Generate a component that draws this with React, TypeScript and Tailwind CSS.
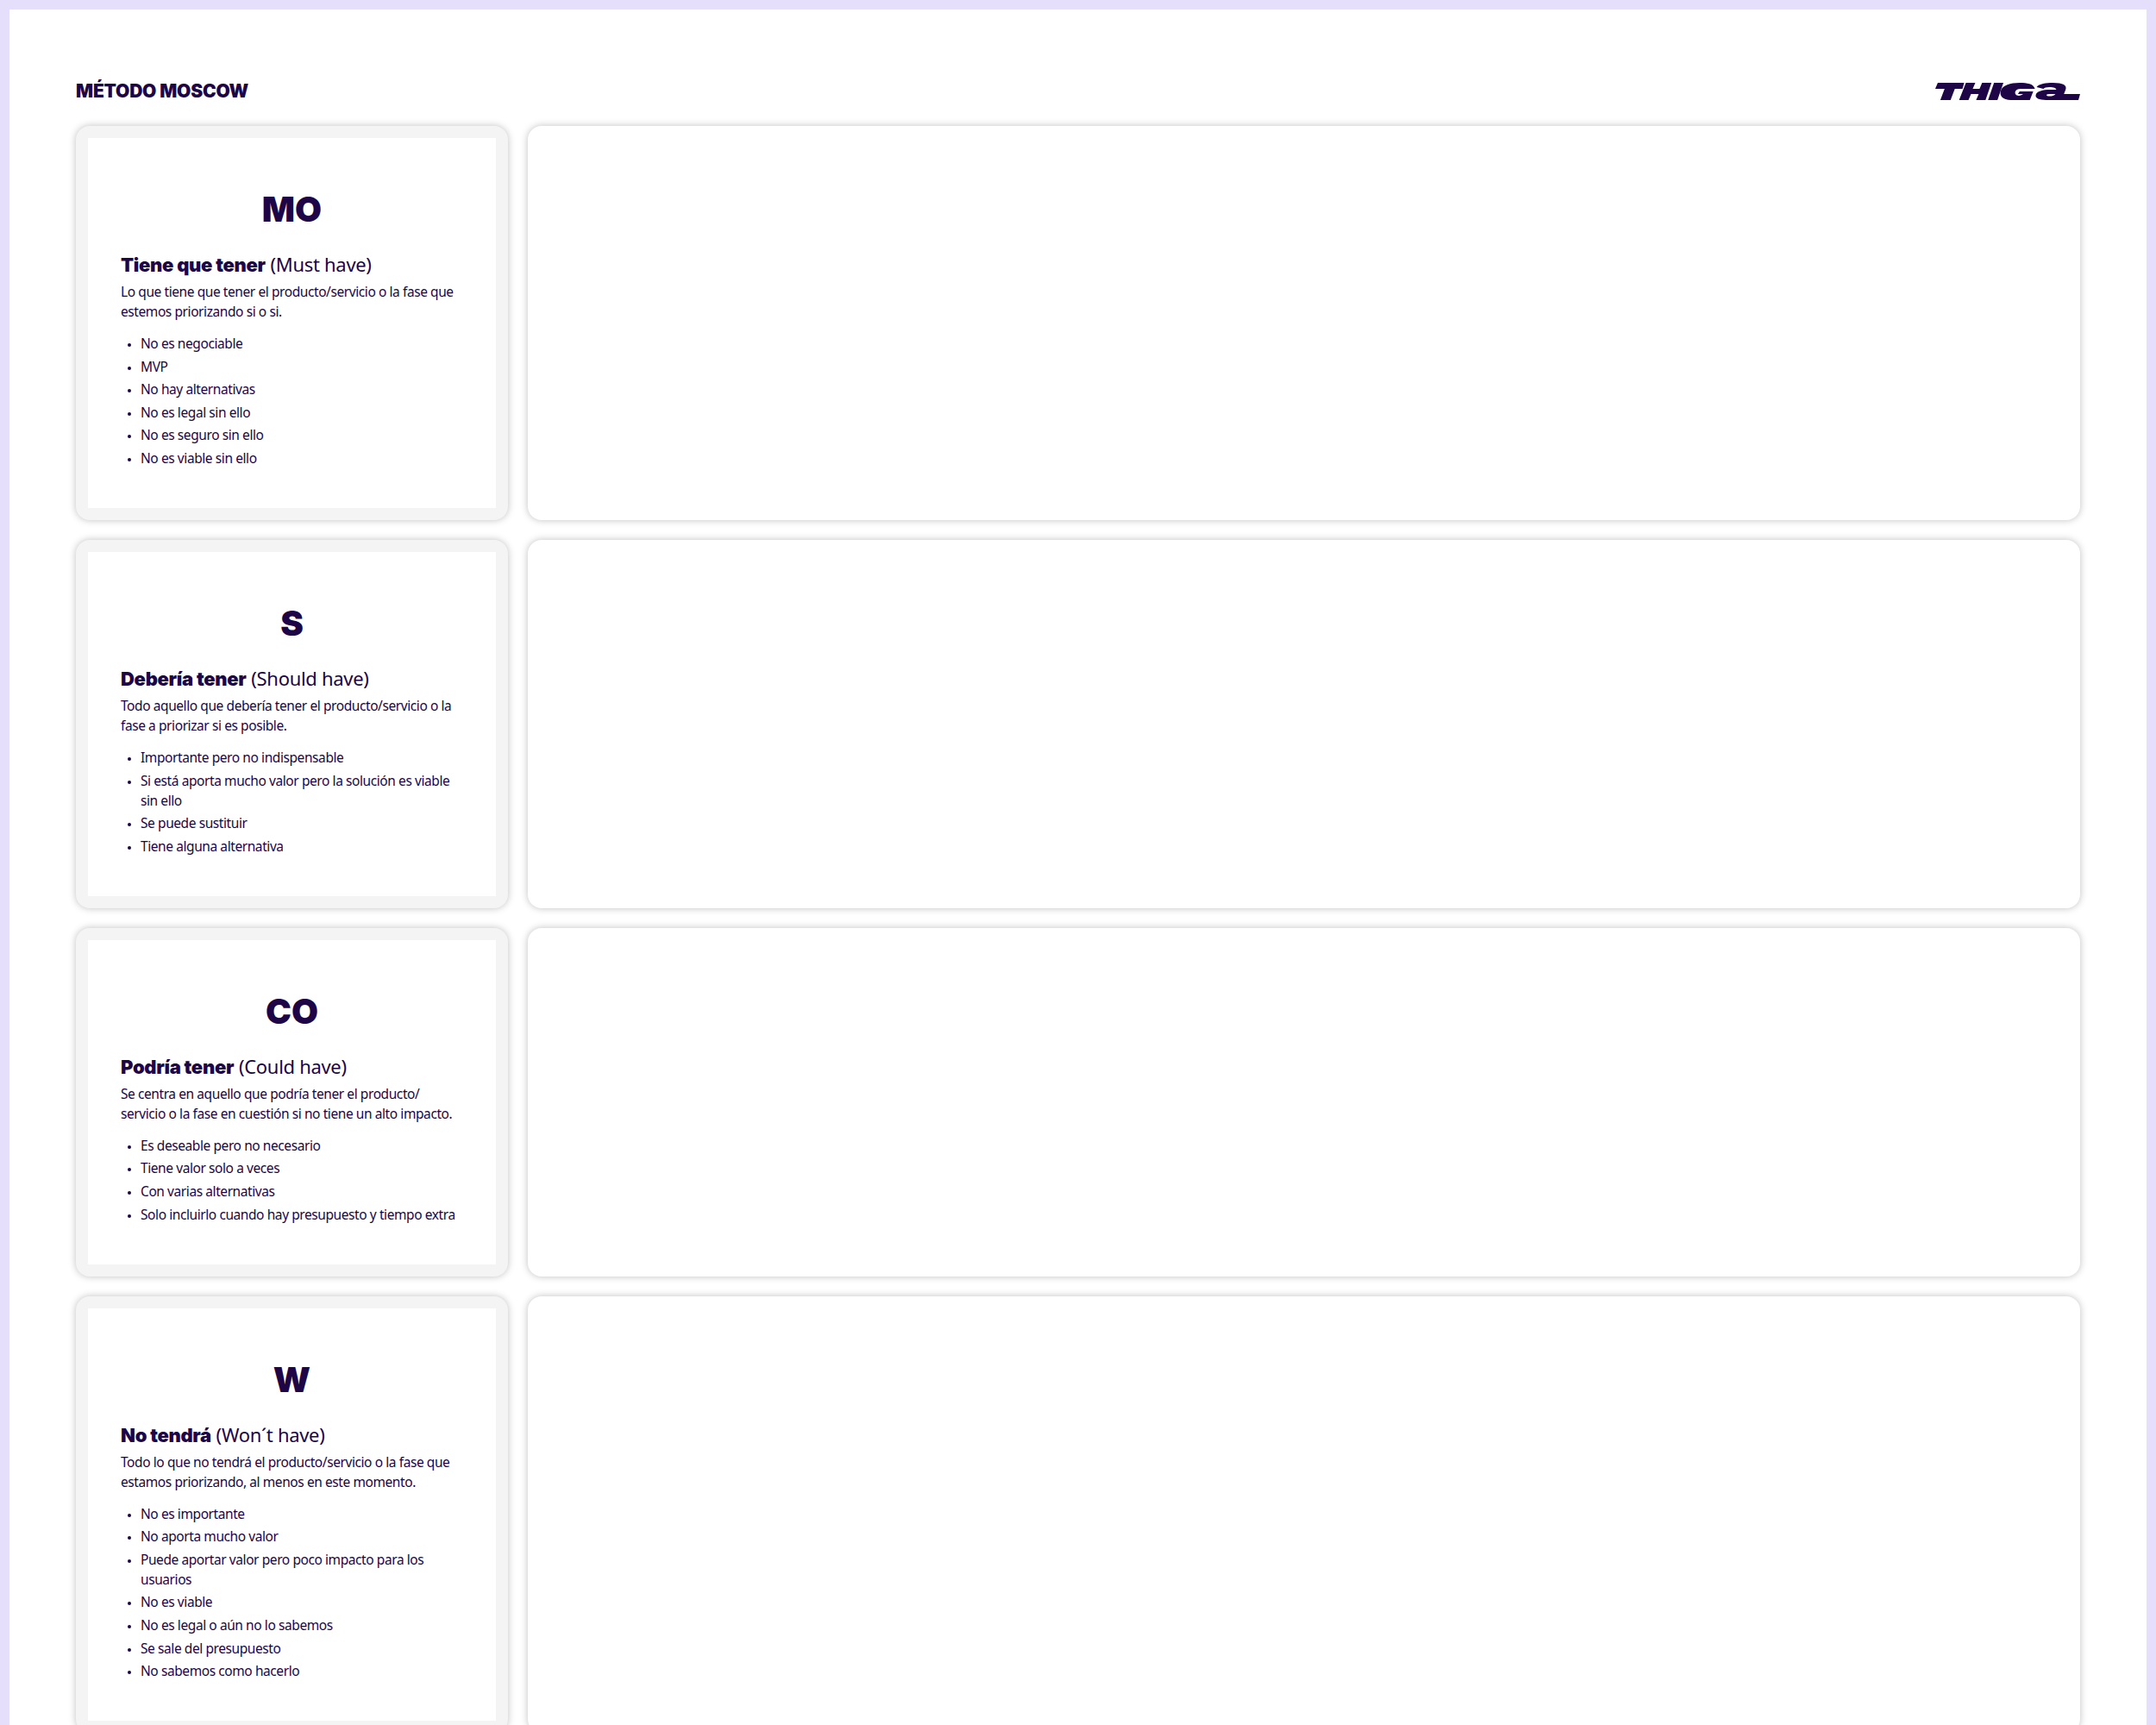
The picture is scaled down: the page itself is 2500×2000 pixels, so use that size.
const ink = "#1d0546";

type Row = { k: string; a: string; b: string; d: string; l: string[] };
const rows: Row[] = [
  { k: "MO", a: "Tiene que tener", b: "(Must have)", d: "Lo que tiene que tener el producto/servicio o la fase que estemos priorizando si o si.", l: ["No es negociable", "MVP", "No hay alternativas", "No es legal sin ello", "No es seguro sin ello", "No es viable sin ello"] },
  { k: "S", a: "Debería tener", b: "(Should have)", d: "Todo aquello que debería tener el producto/servicio o la fase a priorizar si es posible.", l: ["Importante pero no indispensable", "Si está aporta mucho valor pero la solución es viable sin ello", "Se puede sustituir", "Tiene alguna alternativa"] },
  { k: "CO", a: "Podría tener", b: "(Could have)", d: "Se centra en aquello que podría tener el producto/\nservicio o la fase en cuestión si no tiene un alto impacto.", l: ["Es deseable pero no necesario", "Tiene valor solo a veces", "Con varias alternativas", "Solo incluirlo cuando hay presupuesto y tiempo extra"] },
  { k: "W", a: "No tendrá", b: "(Won´t have)", d: "Todo lo que no tendrá el producto/servicio o la fase que estamos priorizando, al menos en este momento.", l: ["No es importante", "No aporta mucho valor", "Puede aportar valor pero poco impacto para los usuarios", "No es viable", "No es legal o aún no lo sabemos", "Se sale del presupuesto", "No sabemos como hacerlo"] },
];

function Logo() {
  return (
    <svg width="168" height="21" viewBox="0 0 170 21" fill={ink}>
      <path d="M3 0H34L32 7H23L18 20H6L11 7H0Z" />
      <path d="M36 0H47L44 7H52L55 0H66L59 20H48L51 13H42L39 20H28Z" />
      <path d="M69 0H80L73 20H62Z" />
      <path d="M99 0C108 0 115 1 117 7H100C97 7 95 8 94 10C93 13 95 15 98 15C100 15 102 14 103 13H97L99 10H115L111 20H89C79 20 75 15 77 9C79 3 88 0 99 0Z" />
      <path fillRule="evenodd" d="M119 5C122 1 130 0 138 0C150 0 155 3 153 8L151 13H170L168 20H130C122 20 117 18 118 14C119 10 126 8 135 8H142C142 6 139 5 134 5C130 5 128 6 127 7ZM134 13C131 13 130 14 131 15C133 16 139 16 141 13Z" />
    </svg>
  );
}

function Card({ r }: { r: Row }) {
  return (
    <div className="flex gap-[23px]">
      <div className="w-[501px] shrink-0 rounded-[16px] bg-[#f4f4f4] p-[14px] shadow-[0_0_8px_rgba(0,0,0,0.25)]">
        <div className="bg-white px-[38px] pt-[50px] pb-[46px]">
          <div className="text-center font-['Inter',sans-serif] text-[40px] leading-[66px] font-black">{r.k}</div>
          <div className="mt-[14px] h-[32px] text-[22px] leading-[32px]">
            <span className="font-['Inter',sans-serif] text-[22px] font-black tracking-[-0.3px]">{r.a}</span> <span className="font-normal tracking-[-0.3px]">{r.b}</span>
          </div>
          <p className="mt-[5px] text-[15.5px] leading-[23px] tracking-[-0.42px] whitespace-pre-line">{r.d}</p>
          <ul className="mt-[14px] flex list-disc flex-col gap-[3.6px] pl-[23px] text-[15.5px] leading-[23px] tracking-[-0.42px] marker:text-[11px]">
            {r.l.map((t) => <li key={t}>{t}</li>)}
          </ul>
        </div>
      </div>
      <div className="flex-1 rounded-[16px] bg-white shadow-[0_0_8px_rgba(0,0,0,0.25)]" />
    </div>
  );
}

export default function App() {
  return (
    <div className="h-[2000px] overflow-hidden bg-[#e6dffb] px-[11px] pt-[11px] font-['Noto_Sans',sans-serif] text-[#1d0546]">
      <div className="h-full bg-white px-[77px] pt-[77px]">
        <div className="flex h-[58px] items-start justify-between">
          <h1 className="pt-[3px] font-['Inter',sans-serif] text-[21px] leading-[30px] font-black uppercase tracking-[-0.2px]">Método Moscow</h1>
          <div className="pt-[8px]"><Logo /></div>
        </div>
        <div className="flex flex-col gap-[23px]">
          {rows.map((r) => <Card key={r.k} r={r} />)}
        </div>
      </div>
    </div>
  );
}
